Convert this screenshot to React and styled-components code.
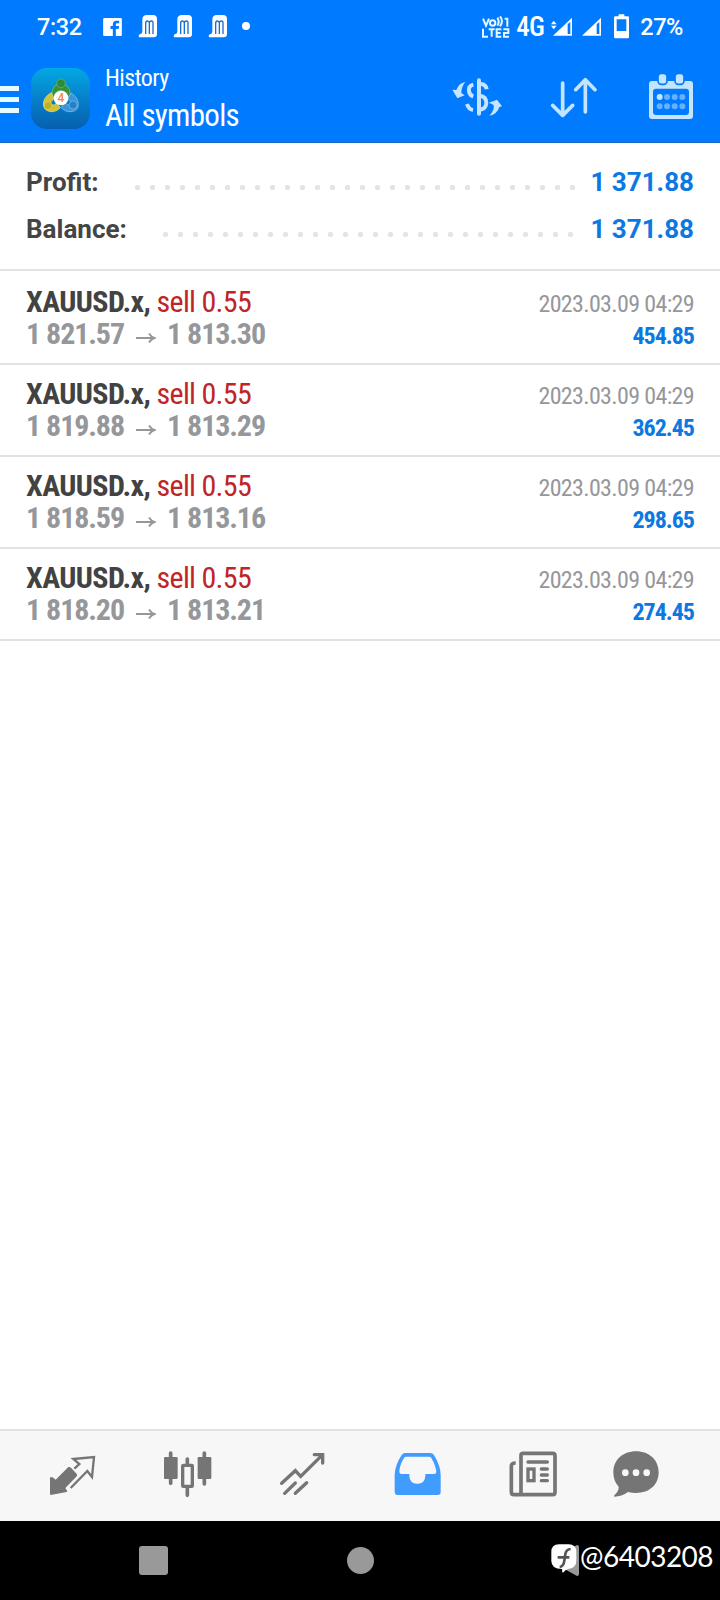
import React from 'react'
import styled, { createGlobalStyle } from 'styled-components'

const deals = [
    { open: '1 821.57', close: '1 813.30', profit: '454.85' },
    { open: '1 819.88', close: '1 813.29', profit: '362.45' },
    { open: '1 818.59', close: '1 813.16', profit: '298.65' },
    { open: '1 818.20', close: '1 813.21', profit: '274.45' },
]

const DocIcon = () => (
    <svg width="20" height="24" viewBox="413 43 60 72">
        <path fill="#fff" d="M426 60Q426 46 440 46H458Q470 46 470 58V104Q470 113 460 113H416Q413 108 418 104Q426 103 426 96Z" />
        <path fill="none" stroke="#1a6fd0" strokeWidth="4" d="M436 103V72Q436 64 441 64T447 70V103M447 70Q447 64 453 64T458 72V103" />
    </svg>
)

const App = () => {
    return (
        <Screen>
            <GlobalStyle />
            <StatusBar>
                <StatusText $left={37}>7:32</StatusText>
                <StatusIcon $left={21} $top={18}>
                    <svg width="19" height="18" viewBox="308 54 56 54">
                        <rect x="308" y="54" width="56" height="54" rx="3" fill="#fff" />
                        <path d="M337 108V87H330V78H337V73Q337 62 348 62H356V70H350Q346 70 346 74V78H356L354 87H346V108Z" fill="#007bff" />
                    </svg>
                </StatusIcon>
                <StatusIcon $left={16} $top={14}><DocIcon /></StatusIcon>
                <StatusIcon $left={15} $top={14}><DocIcon /></StatusIcon>
                <StatusIcon $left={15} $top={14}><DocIcon /></StatusIcon>
                <StatusDot />
                <StatusRight>
                    <svg width="28" height="24" viewBox="126 44 84 72" fill="none" stroke="#e4f7ff" strokeWidth="6">
                        <path d="M129 55L138 76L147 55M172 52Q180 64 172 76M180 48Q192 62 180 78M194 55H202V79M129 85V109H144M146 87H164M155 87V109M184 87H170V109H184M170 98H182M190 87H205V98H192V109H207" />
                        <circle cx="158" cy="68" r="8" />
                    </svg>
                    <Network>4G</Network>
                    <svg width="21" height="20" viewBox="333 51 63 60">
                        <path fill="#fff" d="M339 107L396 53V107Z" />
                        <path fill="#007bff" d="M383 73L391 66V102H383Z" />
                        <path fill="#fff" d="M333 73L341 62L350 73ZM333 77H350L341 88Z" />
                    </svg>
                    <Signal width="19" height="20" viewBox="426 51 57 60">
                        <path fill="#fff" d="M426 107L483 53V107Z" />
                        <path fill="#007bff" d="M470 73L478 66V102H470Z" />
                    </Signal>
                    <Battery width="15" height="25" viewBox="522 41 45 75">
                        <path fill="#fff" fillRule="evenodd" d="M536 42H553V48H563Q567 48 567 52V110Q567 114 563 114H526Q522 114 522 110V52Q522 48 526 48H536ZM530 57V92H559V57Z" />
                    </Battery>
                    <StatusText $left={11}>27%</StatusText>
                </StatusRight>
            </StatusBar>

            <Header>
                <Menu>
                    <MenuLine />
                    <MenuLine />
                    <MenuLine />
                </Menu>
                <AppLogo>
                    <svg width="40" height="40" viewBox="46 50 120 120">
                        <path d="M79 113Q76 82 94 72H118Q136 82 134 113L122 104Q120 91 106 91Q92 91 91 104Z" fill="#38913f" stroke="#86c866" strokeWidth="2" />
                        <path d="M77 97Q55 108 53 131Q54 152 76 154Q94 155 104 141L92 129Q86 138 77 132Q71 125 85 116Z" fill="#cfc338" stroke="#ece482" strokeWidth="2" />
                        <path d="M136 98Q156 110 158 130Q159 152 136 154Q116 155 106 141L118 129Q128 138 136 131Q140 124 126 115Z" fill="#3c95d8" stroke="#8accf0" strokeWidth="2" />
                        <circle cx="106" cy="69" r="13" fill="#2f8a38" stroke="#75bb58" strokeWidth="2" />
                        <circle cx="67" cy="136" r="12" fill="#c1ae21" stroke="#e2da68" strokeWidth="2" />
                        <circle cx="142" cy="134" r="12" fill="#267fc7" stroke="#78bbe8" strokeWidth="2" />
                        <circle cx="106" cy="113" r="22" fill="#fff" />
                        <text x="106" y="126" fontFamily="Roboto, sans-serif" fontSize="36" fontWeight="500" textAnchor="middle" fill="#ee8842">4</text>
                    </svg>
                </AppLogo>
                <Titles>
                    <Caption>History</Caption>
                    <Title>All symbols</Title>
                </Titles>
                <Actions>
                    <svg width="50" height="47" viewBox="36 219 150 141" fill="none" stroke="#c5e4ff">
                        <path strokeWidth="12" strokeLinecap="round" d="M117 241V341" />
                        <path strokeWidth="12" d="M100 254Q84 258 87 274Q89 286 100 289M99 330Q86 328 81 312M122 252Q138 253 140 268M119 287Q139 289 139 309Q138 327 120 329" />
                        <path fill="#c5e4ff" stroke="none" d="M76 246Q56 249 49 270L37 269L52 295L74 286L64 279Q64 260 76 246ZM148 347Q171 344 178 321L186 319L171 299L147 308L161 315Q164 331 148 347Z" />
                    </svg>
                    <svg width="48" height="47" viewBox="330 219 144 141" fill="none" stroke="#c5e4ff" strokeWidth="11" strokeLinecap="round" strokeLinejoin="round">
                        <path d="M368 249V345M338 316L368 346L398 316M436 336V240M407 269L436 239L465 269" />
                    </svg>
                    <Calendar width="46" height="47" viewBox="624 219 138 141">
                        <path fill="#c5e4ff" fillRule="evenodd" d="M636 243H750Q759 243 759 252V348Q759 357 750 357H636Q627 357 627 348V252Q627 243 636 243ZM648 266Q639 266 639 275V336Q639 345 648 345H738Q747 345 747 336V275Q747 266 738 266Z" />
                        <g fill="#c5e4ff" stroke="#007bff" strokeWidth="5">
                            <rect x="654" y="220" width="27" height="33" rx="10" />
                            <rect x="705" y="220" width="27" height="33" rx="10" />
                        </g>
                        <circle cx="659" cy="291" r="9" fill="#c5e4ff" />
                        <g fill="#66b0ff">
                            <circle cx="681" cy="291" r="9" />
                            <circle cx="704" cy="291" r="9" />
                            <circle cx="727" cy="291" r="9" />
                            <circle cx="659" cy="319" r="9" />
                            <circle cx="681" cy="319" r="9" />
                            <circle cx="704" cy="319" r="9" />
                            <circle cx="727" cy="319" r="9" />
                        </g>
                    </Calendar>
                </Actions>
            </Header>

            <Summary>
                <SummaryRow>
                    <span>Profit:</span>
                    <Leader $dots={30} $gap={113} />
                    <Total>1 371.88</Total>
                </SummaryRow>
                <SummaryRow>
                    <span>Balance:</span>
                    <Leader $dots={28} $gap={115} />
                    <Total>1 371.88</Total>
                </SummaryRow>
            </Summary>

            <Deals>
                {deals.map((deal) => (
                    <Deal key={deal.profit}>
                        <div>
                            <Symbol>XAUUSD.x, <Side>sell 0.55</Side></Symbol>
                            <Prices>
                                {deal.open}
                                <Arrow width="20" height="12" viewBox="0 0 20 12">
                                    <path d="M0 6H18M13 1.5Q15 5 18.5 6Q15 7 13 10.5" />
                                </Arrow>
                                {deal.close}
                            </Prices>
                        </div>
                        <DealRight>
                            <Time>2023.03.09 04:29</Time>
                            <Profit>{deal.profit}</Profit>
                        </DealRight>
                    </Deal>
                ))}
            </Deals>

            <Tabs>
                <svg width="47" height="48" viewBox="147 90 141 144">
                    <path fill="#757575" d="M205 141Q210 140 213 143L231 163Q232 167 229 170L196 204L202 214L200 216L152 225L150 222V172L158 172L167 179Z" />
                    <path fill="none" stroke="#757575" strokeWidth="7" d="M212 204L262 153L276 171L282 111L220 117L238 132L223 146" />
                </svg>
                <svg width="49" height="48" viewBox="489 90 147 144" fill="#757575">
                    <rect x="492" y="111" width="41" height="66" rx="4" />
                    <rect x="593" y="111" width="41" height="66" rx="4" />
                    <path stroke="#757575" strokeWidth="11" strokeLinecap="round" d="M512 99V190M613 99V192M562 117V134M562 202V226" />
                    <rect x="548" y="136" width="29" height="63" rx="2" fill="#f7f7f7" stroke="#757575" strokeWidth="10" />
                </svg>
                <svg width="47" height="48" viewBox="837 90 141 144" fill="none" stroke="#757575" strokeWidth="10">
                    <path strokeLinecap="round" d="M845 190L886 152L902 169L965 107M943 104H968V129M854 220L886 189M886 220L920 188" />
                </svg>
                <svg width="47" height="48" viewBox="102 90 141 144">
                    <path fill="#409cff" fillRule="evenodd" d="M135 99H211Q218 99 222 105Q242 138 242 165V216Q242 225 233 225H113Q104 225 104 216V165Q105 135 125 105Q129 99 135 99ZM139 110Q134 110 132 114Q118 137 118 156Q118 162 125 162H148V167Q149 191 172 191Q195 191 196 167V162H222Q229 162 229 156Q227 136 214 114Q212 110 207 110Z" />
                </svg>
                <svg width="49" height="48" viewBox="444 90 147 144" fill="none" stroke="#757575" strokeWidth="11">
                    <path d="M489 100H578Q585 100 585 107V217Q585 224 578 224H462Q454 224 454 215V138Q454 129 467 129M483 224V106Q483 100 489 100" />
                    <path strokeWidth="10" strokeLinecap="round" d="M504 126H562M544 147H562M544 165H562M544 182H562" />
                    <rect x="504" y="147" width="18" height="35" strokeWidth="10" />
                </svg>
                <svg width="46" height="48" viewBox="759 90 138 144">
                    <path fill="#757575" d="M828 94C869 94 896 121 896 157C896 195 868 219 828 219Q816 219 804 216Q785 230 763 230Q760 229 764 225Q777 212 776 200C765 189 760 174 760 157C760 120 788 94 828 94Z" />
                    <g fill="#f7f7f7">
                        <circle cx="796" cy="158" r="10" />
                        <circle cx="828" cy="158" r="10" />
                        <circle cx="860" cy="158" r="10" />
                    </g>
                </svg>
            </Tabs>

            <SystemNav>
                <Recent />
                <Home />
                <svg width="28" height="31" viewBox="0 0 28 31">
                    <path d="M26 0Q28 0 28 2V29Q28 31 26 31L1 17Q0 15.500 1 14Z" fill="#999" />
                </svg>
                <Watermark>
                    <svg width="26" height="29" viewBox="574 371 78 87">
                        <path fill="#fff" d="M598 372H627Q650 372 650 395V421Q650 443 628 445Q618 447 610 457Q607 456 607 446Q575 446 575 421V395Q575 372 598 372Z" />
                        <path d="M600 440Q612 438 614 421L617 401Q620 387 633 386M594 411H629" fill="none" stroke="#555" strokeWidth="8" />
                    </svg>
                    <Handle>@6403208</Handle>
                </Watermark>
            </SystemNav>
        </Screen>
    )
}

const GlobalStyle = createGlobalStyle`
    * {
        box-sizing: border-box;
    }
    body {
        margin: 0;
        font-family: Roboto, sans-serif;
    }
    svg {
        display: block;
        flex-shrink: 0;
    }
`

const Screen = styled.div`
    display: flex;
    flex-direction: column;
    width: 720px;
    height: 1600px;
    background: #fff;
    overflow: hidden;
`

const StatusBar = styled.div`
    display: flex;
    align-items: flex-start;
    height: 56px;
    background: #007bff;
    color: #fff;
`

const StatusText = styled.span`
    margin: 13px 0 0 ${props => props.$left}px;
    font-size: 23.5px;
    font-weight: 500;
    letter-spacing: -0.4px;
    line-height: 28px;
`

const StatusIcon = styled.div`
    margin: ${props => props.$top}px 0 0 ${props => props.$left}px;
`

const StatusDot = styled.div`
    width: 8px;
    height: 8px;
    margin: 22px 0 0 14px;
    border-radius: 50%;
    background: #fff;
`

const StatusRight = styled.div`
    display: flex;
    margin-left: auto;
    padding-right: 37px;

    > svg {
        margin-top: 17px;
    }
    > svg:first-child {
        margin-top: 15px;
    }
`

const Network = styled.span`
    width: 28px;
    margin: 12px 7px 0 6px;
    font-family: 'Roboto Condensed', Roboto, sans-serif;
    font-stretch: 75%;
    font-size: 27px;
    font-weight: 500;
    letter-spacing: -0.6px;
    line-height: 30px;
`

const Signal = styled.svg`
    margin-left: 10px;
`

const Battery = styled.svg`
    && {
        margin: 14px 0 0 13px;
    }
`

const Header = styled.div`
    display: flex;
    align-items: flex-start;
    height: 87px;
    background: #007bff;
    border-bottom: 1px solid #1668c0;
    color: #fff;
`

const Menu = styled.div`
    display: grid;
    gap: 6px;
    width: 19px;
    margin-top: 30px;
`

const MenuLine = styled.div`
    height: 5px;
    background: #e6fbff;
`

const AppLogo = styled.div`
    display: flex;
    align-items: center;
    justify-content: center;
    width: 59px;
    height: 61px;
    margin: 12px 0 0 12px;
    padding-bottom: 3px;
    border-radius: 16px;
    background: linear-gradient(#02a9e3, #0684cd 45%, #065faf);
`

const Titles = styled.div`
    margin: 8px 0 0 15px;
    font-family: 'Roboto Condensed', Roboto, sans-serif;
    font-stretch: 75%;
    white-space: nowrap;
`

const Caption = styled.div`
    font-size: 24px;
    letter-spacing: -0.6px;
    line-height: 28px;
`

const Title = styled.div`
    margin-top: 6px;
    font-size: 31px;
    letter-spacing: -0.7px;
    line-height: 36px;
`

const Actions = styled.div`
    display: flex;
    gap: 48px;
    margin: 17px 26px 0 auto;
`

const Calendar = styled.svg`
    margin-left: 2px;
`

const Summary = styled.div`
    height: 128px;
    padding: 16px 26px 0;
    border-bottom: 2px solid #e2e2e2;
    color: #454545;
    font-size: 26px;
    font-weight: 700;
`

const SummaryRow = styled.div`
    display: flex;
    height: 47px;
    line-height: 47px;
`

const Leader = styled.div`
    width: ${props => props.$dots * 15}px;
    margin-left: auto;
    margin-right: calc(${props => props.$gap}px - 105px);
    background: radial-gradient(circle at 7.5px 28.5px, #e4e4e4 2.2px, transparent 3px) 0 0 / 15px 47px repeat-x;
`

const Total = styled.div`
    width: 106px;
    text-align: right;
    color: #0c78e2;
`

const Deals = styled.div`
    flex: 1;
    padding-top: 2px;
`

const Deal = styled.div`
    display: flex;
    justify-content: space-between;
    height: 92px;
    padding: 13px 26px 0;
    border-bottom: 2px solid #e2e2e2;
    font-family: 'Roboto Condensed', Roboto, sans-serif;
    font-stretch: 75%;
    white-space: nowrap;
`

const Symbol = styled.div`
    color: #424242;
    font-size: 30px;
    font-weight: 700;
    letter-spacing: -0.6px;
    line-height: 32px;
`

const Side = styled.span`
    color: #bf2525;
    font-weight: 400;
    letter-spacing: -0.7px;
`

const Prices = styled.div`
    display: flex;
    color: #96979b;
    font-size: 30px;
    font-weight: 700;
    letter-spacing: -1.1px;
    word-spacing: 0.2px;
    line-height: 32px;
`

const Arrow = styled.svg`
    margin: 14px 11px 0 12px;
    fill: none;
    stroke: #96979b;
    stroke-width: 2;
`

const DealRight = styled.div`
    padding-top: 2px;
    text-align: right;
    font-size: 24px;
    line-height: 32px;
`

const Time = styled.div`
    color: #96979b;
    letter-spacing: -0.65px;
`

const Profit = styled.div`
    color: #0c78e2;
    font-weight: 700;
    letter-spacing: -1px;
`

const Tabs = styled.div`
    display: grid;
    grid-template-columns: repeat(5, 115px) 92px;
    justify-items: center;
    height: 92px;
    padding: 19px 0 0 15px;
    background: #f7f7f7;
    border-top: 2px solid #e2e2e2;
`

const SystemNav = styled.div`
    position: relative;
    display: flex;
    align-items: center;
    height: 79px;
    padding-left: 139px;
    background: #000;
`

const Recent = styled.div`
    width: 29px;
    height: 29px;
    border-radius: 3px;
    background: #999;
`

const Home = styled.div`
    width: 27px;
    height: 27px;
    margin: 0 177px 0 179px;
    border-radius: 50%;
    background: #999;
`

const Watermark = styled.div`
    position: absolute;
    top: 23px;
    left: 551px;
    display: flex;
    color: #fff;
`

const Handle = styled.span`
    margin: -5px 0 0 3px;
    font-family: Lato, sans-serif;
    font-size: 28px;
    letter-spacing: -0.5px;
    line-height: 34px;
`

export default App
